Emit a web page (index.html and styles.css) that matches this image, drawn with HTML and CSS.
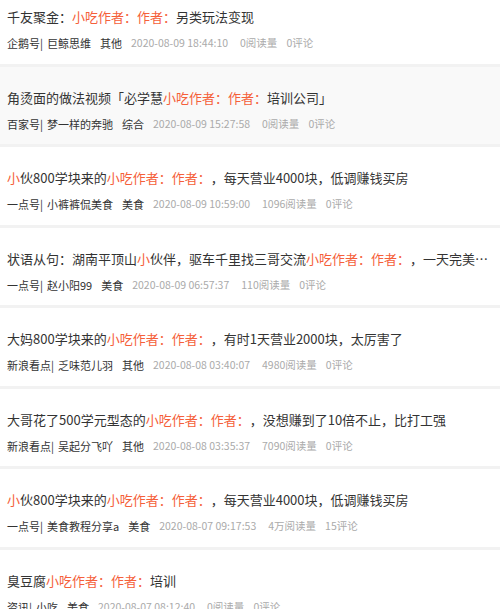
FILE: index.html
```html
<!DOCTYPE html>
<html lang="zh">
<head>
    <meta charset="UTF-8" />
    <title>小吃作者</title>
    <link rel="stylesheet" href="styles.css">
</head>
<body>
    <ul class="news_list">
        <li class="news_item">
            <div class="news_title">千友聚金：<em>小吃作者：作者：</em>另类玩法变现</div>
            <div class="news_meta">
                <span class="src">企鹅号|<span class="author">巨鲸思维</span></span><span class="cat">其他</span>
                <span class="time">2020-08-09 18:44:10</span><span class="num">0阅读量</span><span class="num">0评论</span>
            </div>
        </li>
        <li class="news_item active">
            <div class="news_title">角烫面的做法视频「必学慧<em>小吃作者：作者：</em>培训公司」</div>
            <div class="news_meta">
                <span class="src">百家号|<span class="author">梦一样的奔驰</span></span><span class="cat">综合</span>
                <span class="time">2020-08-09 15:27:58</span><span class="num">0阅读量</span><span class="num">0评论</span>
            </div>
        </li>
        <li class="news_item">
            <div class="news_title"><em>小</em>伙800学块来的<em>小吃作者：作者：</em>，每天营业4000块，低调赚钱买房</div>
            <div class="news_meta">
                <span class="src">一点号|<span class="author">小裤裤侃美食</span></span><span class="cat">美食</span>
                <span class="time">2020-08-09 10:59:00</span><span class="num">1096阅读量</span><span class="num">0评论</span>
            </div>
        </li>
        <li class="news_item">
            <div class="news_title">状语从句：湖南平顶山<em>小</em>伙伴，驱车千里找三哥交流<em>小吃作者：作者：</em>，一天完美收入过千元</div>
            <div class="news_meta">
                <span class="src">一点号|<span class="author">赵小阳99</span></span><span class="cat">美食</span>
                <span class="time">2020-08-09 06:57:37</span><span class="num">110阅读量</span><span class="num">0评论</span>
            </div>
        </li>
        <li class="news_item">
            <div class="news_title">大妈800学块来的<em>小吃作者：作者：</em>，有时1天营业2000块，太厉害了</div>
            <div class="news_meta">
                <span class="src">新浪看点|<span class="author">乏味范儿羽</span></span><span class="cat">其他</span>
                <span class="time">2020-08-08 03:40:07</span><span class="num">4980阅读量</span><span class="num">0评论</span>
            </div>
        </li>
        <li class="news_item">
            <div class="news_title">大哥花了500学元型态的<em>小吃作者：作者：</em>，没想赚到了10倍不止，比打工强</div>
            <div class="news_meta">
                <span class="src">新浪看点|<span class="author">吴起分飞吖</span></span><span class="cat">其他</span>
                <span class="time">2020-08-08 03:35:37</span><span class="num">7090阅读量</span><span class="num">0评论</span>
            </div>
        </li>
        <li class="news_item">
            <div class="news_title"><em>小</em>伙800学块来的<em>小吃作者：作者：</em>，每天营业4000块，低调赚钱买房</div>
            <div class="news_meta">
                <span class="src">一点号|<span class="author">美食教程分享a</span></span><span class="cat">美食</span>
                <span class="time">2020-08-07 09:17:53</span><span class="num">4万阅读量</span><span class="num">15评论</span>
            </div>
        </li>
        <li class="news_item">
            <div class="news_title">臭豆腐<em>小吃作者：作者：</em>培训</div>
            <div class="news_meta">
                <span class="src">资讯|<span class="author">小吃</span></span><span class="cat">美食</span>
                <span class="time">2020-08-07 08:12:40</span><span class="num">0阅读量</span><span class="num">0评论</span>
            </div>
        </li>
    </ul>
</body>
</html>
```

FILE: styles.css
```css
body, html {
    margin: 0;
    padding: 0;
    background-color: #fff;
    font-family: "Noto Sans CJK SC", "Noto Sans", sans-serif;
    color: #333;
}
.news_list {
    list-style: none;
    margin: -14px 0 0;
    padding: 0;
}
.news_item {
    padding: 20px 7px 12px;
    border-bottom: 3px solid #f2f2f2;
    background-color: #fff;
}
.news_item.active {
    background-color: #f9f9f9;
}
.news_title {
    font-size: 13px;
    line-height: 21px;
    height: 21px;
    margin-bottom: 8px;
    white-space: nowrap;
    overflow: hidden;
    text-overflow: ellipsis;
    text-spacing-trim: space-all;
    color: #333;
}
.news_title em {
    font-style: normal;
    color: #f5603a;
}
.news_meta {
    display: flex;
    align-items: center;
    gap: 9px;
    font-size: 11px;
    line-height: 16.5px;
    white-space: nowrap;
    text-spacing-trim: space-all;
}
.news_meta .src,
.news_meta .cat {
    color: #333;
}
.news_meta .author {
    margin-left: 4px;
}
.news_meta .time,
.news_meta .num {
    color: #aaa;
    font-size: 10.5px;
}
.news_meta .time {
    margin-right: 3px;
}
```
